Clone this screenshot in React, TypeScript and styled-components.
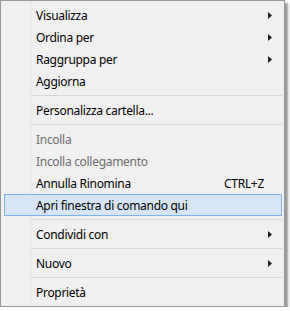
import { createGlobalStyle, styled } from "styled-components";

type Entry =
  | { kind: "sep" }
  | {
      kind: "item";
      label: string;
      submenu?: boolean;
      disabled?: boolean;
      hotkey?: string;
      active?: boolean;
    };

const entries: Entry[] = [
  { kind: "item", label: "Visualizza", submenu: true },
  { kind: "item", label: "Ordina per", submenu: true },
  { kind: "item", label: "Raggruppa per", submenu: true },
  { kind: "item", label: "Aggiorna" },
  { kind: "sep" },
  { kind: "item", label: "Personalizza cartella..." },
  { kind: "sep" },
  { kind: "item", label: "Incolla", disabled: true },
  { kind: "item", label: "Incolla collegamento", disabled: true },
  { kind: "item", label: "Annulla Rinomina", hotkey: "CTRL+Z" },
  { kind: "item", label: "Apri finestra di comando qui", active: true },
  { kind: "sep" },
  { kind: "item", label: "Condividi con", submenu: true },
  { kind: "sep" },
  { kind: "item", label: "Nuovo", submenu: true },
  { kind: "sep" },
  { kind: "item", label: "Proprietà" },
];

export default function App() {
  return (
    <>
      <GlobalStyle />
      <Menu>
        {entries.map((e, i) =>
          e.kind === "sep" ? (
            <Separator key={i} />
          ) : (
            <Item key={i} $active={e.active} $disabled={e.disabled}>
              <Label>{e.label}</Label>
              {e.hotkey && <Hotkey>{e.hotkey}</Hotkey>}
              {e.submenu && (
                <Arrow viewBox="0 0 4 7" width={4} height={7}>
                  <path d="M0 0 L4 3.5 L0 7 Z" fill="#202020" />
                </Arrow>
              )}
            </Item>
          )
        )}
      </Menu>
    </>
  );
}

const GlobalStyle = createGlobalStyle`
  body {
    margin: 0;
    background: #ffffff;
    font-family: "Noto Sans", "Open Sans", sans-serif;
  }
`;

const Menu = styled.div`
  width: 285px;
  box-sizing: border-box;
  padding: 3px 0 3px 0;
  border: 1px solid #979797;
  background-color: #f0f0f0;
  background-image: linear-gradient(
    to right,
    transparent 29px,
    #e2e3e3 29px,
    #e2e3e3 30px,
    transparent 30px
  );
  box-shadow: 3px 3px 2px rgba(0, 0, 0, 0.4);
  display: flex;
  flex-direction: column;
`;

const Item = styled.div<{ $active?: boolean; $disabled?: boolean }>`
  height: 22px;
  margin: 0 2px 0 3px;
  padding: 0 9px 0 31px;
  box-sizing: border-box;
  display: flex;
  align-items: center;
  font-size: 12px;
  letter-spacing: -0.3px;
  color: ${(p) => (p.$disabled ? "#6d6d6d" : "#000000")};
  border: 1px solid ${(p) => (p.$active ? "#7eb4ea" : "transparent")};
  background: ${(p) => (p.$active ? "#d5e5f6" : "transparent")};
`;

const Label = styled.span`
  flex: 1;
  white-space: nowrap;
`;

const Hotkey = styled.span`
  margin-right: 8px;
`;

const Arrow = styled.svg`
  display: block;
`;

const Separator = styled.div`
  height: 1px;
  margin: 3px 2px 3px 30px;
  background: #d7d7d7;
`;
